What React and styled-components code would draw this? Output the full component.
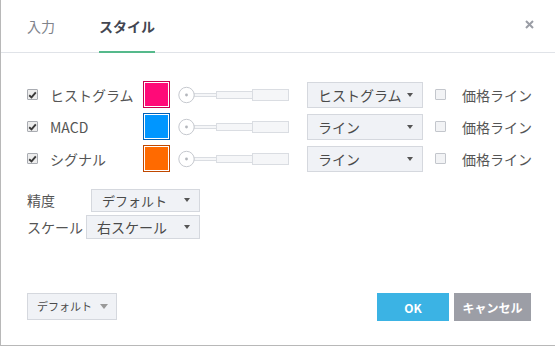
import React from "react";
import styled, { createGlobalStyle } from "styled-components";

const Global = createGlobalStyle`
  html, body { margin: 0; padding: 0; background: #fff; }
  body { font-family: "Noto Sans CJK JP", "Noto Sans", sans-serif; color: #4a4a4a; }
  * { box-sizing: border-box; }
`;

const Dialog = styled.div`
  width: 555px;
  height: 346px;
  border-left: 1px solid #b8b8b8;
  border-bottom: 1px solid #b8b8b8;
  display: flex;
  flex-direction: column;
  background: #fff;
`;

const Header = styled.div`
  height: 53px;
  border-bottom: 1px solid #e0e3e8;
  display: flex;
  align-items: stretch;
  padding-left: 26px;
  padding-right: 21px;
  gap: 44px;
`;

const Tab = styled.div`
  display: flex;
  align-items: center;
  font-size: 14px;
  line-height: 1;
  padding-top: 1px;
  color: ${(p) => (p.$active ? "#434651" : "#80838b")};
  font-weight: ${(p) => (p.$active ? 700 : 400)};
  border-bottom: 2px solid ${(p) => (p.$active ? "#55b98b" : "transparent")};
  margin-bottom: -1px;
`;

const Close = styled.button`
  margin-left: auto;
  align-self: center;
  border: 0;
  background: none;
  padding: 0;
  margin-top: -4px;
  width: 9px;
  height: 9px;
  display: flex;
  cursor: pointer;
`;

const Body = styled.div`
  padding: 28px 0 0 26px;
  display: flex;
  flex-direction: column;
  flex: 1;
`;

const Rows = styled.div`
  display: grid;
  grid-auto-rows: 27px;
  row-gap: 5px;
`;

const Row = styled.div`
  display: flex;
  align-items: center;
`;

const CheckBox = styled.span`
  width: 11px;
  height: 11px;
  border: 1px solid ${(p) => (p.$checked ? "#a9acb2" : "#c3c6cc")};
  border-radius: 1px;
  background: ${(p) => (p.$checked ? "#ededed" : "#f2f3f5")};
  display: flex;
  align-items: center;
  justify-content: center;
  flex: none;
`;

const Label = styled.span`
  font-size: 14px;
  line-height: 1;
  color: #555;
  white-space: nowrap;
  width: ${(p) => p.$width || "auto"};
  margin-left: ${(p) => p.$ml || "0px"};
  flex: none;
`;

const Swatch = styled.span`
  width: 27px;
  height: 27px;
  border: 1px solid ${(p) => p.$edge};
  background: ${(p) => p.$color};
  box-shadow: inset 0 0 0 1px #fff;
  flex: none;
`;

const SliderWrap = styled.span`
  margin-left: 8px;
  display: flex;
  flex: none;
`;

const Select = styled.div`
  height: ${(p) => p.$h || "26px"};
  width: ${(p) => p.$w};
  margin-left: ${(p) => p.$ml || "0px"};
  background: #f0f2f6;
  border: 1px solid #d5d8de;
  display: flex;
  align-items: center;
  justify-content: space-between;
  padding: 0 9px 0 10px;
  font-size: ${(p) => p.$fs || "14px"};
  line-height: 1;
  white-space: nowrap;
  color: #4a4a4a;
  flex: none;
`;

const Arrow = styled.span`
  width: 0;
  height: 0;
  flex: none;
  border-left: ${(p) => p.$half || 3.5}px solid transparent;
  border-right: ${(p) => p.$half || 3.5}px solid transparent;
  border-top: ${(p) => p.$tall || 4}px solid ${(p) => p.$color || "#555"};
  margin-left: 3px;
`;

const PriceCheck = styled.span`
  margin-left: 12px;
  display: flex;
  align-items: center;
  gap: 16px;
`;

const Settings = styled.div`
  margin-top: 16px;
  display: grid;
  grid-template-columns: 59px 114px;
  grid-auto-rows: 24px;
  row-gap: 3px;
  align-items: center;
`;

const SetSelect = styled(Select)`
  justify-self: end;
`;

const Footer = styled.div`
  margin-top: auto;
  display: flex;
  align-items: center;
  padding: 0 24px 24px 0;
  gap: 5px;
`;

const DefaultButton = styled.button`
  height: 27px;
  width: 90px;
  background: #f0f2f6;
  border: 1px solid #d5d8de;
  font-family: inherit;
  font-size: 11px;
  line-height: 1;
  white-space: nowrap;
  color: #4a4a4a;
  display: flex;
  align-items: center;
  padding: 0 8px 0 9px;
  justify-content: space-between;
  margin-right: auto;
  margin-top: -1px;
`;

const ActionButton = styled.button`
  height: 28px;
  width: ${(p) => p.$w};
  border: 0;
  background: ${(p) => p.$bg};
  color: #fff;
  font-family: inherit;
  font-weight: 700;
  font-size: 12px;
  white-space: nowrap;
  display: flex;
  align-items: center;
  justify-content: center;
  padding: 0;
`;

const Check = () => (
  <svg width="9" height="8" viewBox="0 0 9 8">
    <path d="M1.2 4.2 L3.5 6.4 L7.8 1.4" fill="none" stroke="#3a3a3a" strokeWidth="1.9" />
  </svg>
);

const Slider = () => (
  <svg width="112" height="18" viewBox="0 0 112 18">
    <rect x="16" y="7.5" width="23" height="3" fill="#f5f6f8" stroke="#dadde2" />
    <rect x="38.5" y="5.5" width="36" height="7" fill="#f5f6f8" stroke="#dadde2" />
    <rect x="74.5" y="3.5" width="36" height="11" fill="#f5f6f8" stroke="#dadde2" />
    <circle cx="8.5" cy="9" r="7.7" fill="#fff" stroke="#c6c9cf" />
    <circle cx="8.5" cy="9" r="1.4" fill="#b3b6bc" />
  </svg>
);

const lines = [
  { name: "ヒストグラム", color: "#ff0a78", edge: "#c8004f", type: "ヒストグラム" },
  { name: "MACD", color: "#0096ff", edge: "#0060b8", type: "ライン" },
  { name: "シグナル", color: "#ff6a00", edge: "#c04800", type: "ライン" },
];

export default function App() {
  return (
    <>
      <Global />
      <Dialog>
        <Header>
          <Tab>入力</Tab>
          <Tab $active>スタイル</Tab>
          <Close aria-label="close">
            <svg width="9" height="9" viewBox="0 0 9 9">
              <path d="M1 1 L8 8 M8 1 L1 8" stroke="#9a9da5" strokeWidth="2" />
            </svg>
          </Close>
        </Header>
        <Body>
          <Rows>
            {lines.map((l) => (
              <Row key={l.name}>
                <CheckBox $checked>
                  <Check />
                </CheckBox>
                <Label $width="93px" $ml="12px">{l.name}</Label>
                <Swatch $color={l.color} $edge={l.edge} />
                <SliderWrap>
                  <Slider />
                </SliderWrap>
                <Select $w="116px" $ml="17px">
                  {l.type}
                  <Arrow />
                </Select>
                <PriceCheck>
                  <CheckBox />
                  <Label>価格ライン</Label>
                </PriceCheck>
              </Row>
            ))}
          </Rows>
          <Settings>
            <Label>精度</Label>
            <SetSelect $w="109px" $h="23px" $fs="13px">
              デフォルト
              <Arrow />
            </SetSelect>
            <Label>スケール</Label>
            <SetSelect $w="114px" $h="24px">
              右スケール
              <Arrow />
            </SetSelect>
          </Settings>
          <Footer>
            <DefaultButton>
              デフォルト
              <Arrow $half={4} $tall={5} $color="#999" />
            </DefaultButton>
            <ActionButton $w="72px" $bg="#3bb3e4">OK</ActionButton>
            <ActionButton $w="77px" $bg="#9c9ea6">キャンセル</ActionButton>
          </Footer>
        </Body>
      </Dialog>
    </>
  );
}
